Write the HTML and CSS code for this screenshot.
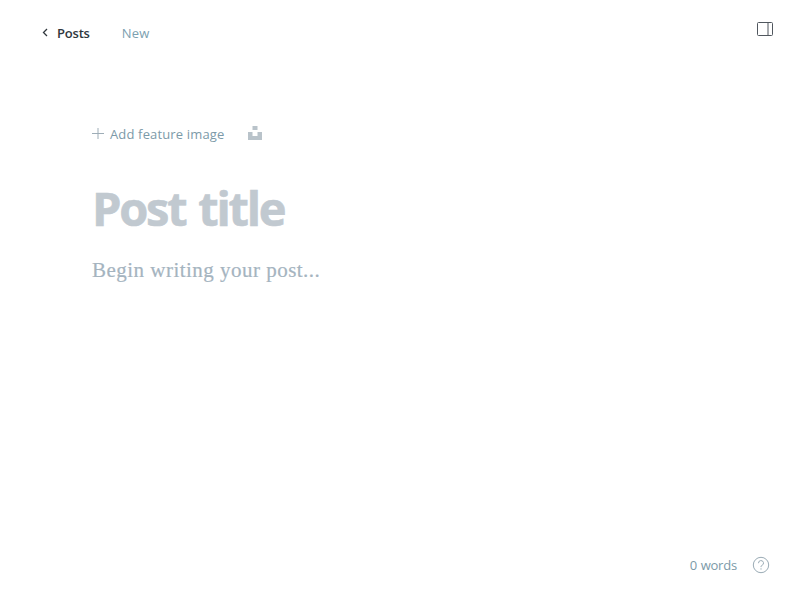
FILE: index.html
```html
<!DOCTYPE html>
<html lang="en">
<head>
<meta charset="utf-8">
<title>Post editor</title>
<link rel="stylesheet" href="styles.css">
</head>
<body>
<div class="editor">
  <header class="header">
    <nav class="nav">
      <a class="back"><svg class="chevron" width="6" height="10" viewBox="0 0 6 10"><path d="M5 1 1.5 4.5 5 8"/></svg><span class="posts">Posts</span></a>
      <span class="status">New</span>
    </nav>
    <button class="sidebar-toggle" aria-label="Settings"><svg width="16" height="14" viewBox="0 0 16 14"><rect x=".5" y=".5" width="15" height="13" rx="1"/><path d="M11 .5v13"/></svg></button>
  </header>
  <main class="content">
    <div class="feature">
      <svg class="plus" width="12" height="12" viewBox="0 0 12 12"><path d="M6 0v11M0 5.5h12"/></svg>
      <span class="feature-label">Add feature image</span>
      <svg class="unsplash" width="14" height="14" viewBox="0 0 14 14"><path d="M4.5 0h5v4h-5zM0 6h4.5v4h5V6H14v8H0z"/></svg>
    </div>
    <h1 class="title">Post title</h1>
    <p class="body-text">Begin writing your post...</p>
  </main>
  <footer class="footer">
    <span class="words">0 words</span>
    <svg class="help" width="18" height="18" viewBox="0 0 18 18"><circle cx="9" cy="9" r="7.7"/><path d="M6.5 7.2a2.5 2.5 0 1 1 3.4 2.2c-.7.3-.9.7-.9 1.4v.3"/><circle class="dot" cx="9" cy="12.9" r=".7"/></svg>
  </footer>
</div>
</body>
</html>
```
FILE: styles.css
```css
* { box-sizing: border-box; }
body { margin: 0; background: #fff; font-family: "Open Sans", "Noto Sans", sans-serif; font-size: 13px; }
svg { display: block; fill: none; stroke: currentColor; flex: none; }
.editor { height: 612px; display: flex; flex-direction: column; overflow: hidden; }
.header { display: flex; justify-content: space-between; align-items: flex-start; padding: 21px 38px 0 41.5px; height: 122px; }
.nav, .back { display: flex; align-items: center; line-height: 24px; }
.nav { gap: 32px; }
.back { gap: 9.5px; color: #30373d; }
.chevron { stroke-width: 1.3; }
.posts { font-weight: 600; letter-spacing: -.2px; }
.status { color: #7c9fb0; letter-spacing: .2px; }
.words { color: #7c9aa8; letter-spacing: -.2px; word-spacing: .5px; }
.sidebar-toggle { border: 0; background: none; padding: 1px 0 0; color: #50575e; }
.content { flex: 1; padding-left: 92px; }
.feature { display: flex; align-items: center; height: 24px; color: #7c9aa8; }
.plus { color: #9eadb7; }
.feature-label { margin: 0 24px 0 6px; letter-spacing: .15px; }
.unsplash { fill: #b9c3ca; stroke: none; margin-top: -2px; }
.title { margin: 40px 0 0; font-size: 47px; line-height: 44px; font-weight: 700; color: #c1c9d0; letter-spacing: -2.25px; word-spacing: 3px; -webkit-text-stroke: .6px #c1c9d0; }
.body-text { margin: 24px 0 0; font-family: Georgia, "Liberation Serif", serif; font-size: 21px; line-height: 32px; color: #a5b4bf; letter-spacing: .48px; -webkit-text-stroke: .2px #a5b4bf; }
.footer { display: flex; justify-content: flex-end; align-items: center; gap: 15px; padding-right: 41px; height: 24px; margin-bottom: 35px; color: #9aabb5; }
.dot { fill: currentColor; stroke: none; }
```
